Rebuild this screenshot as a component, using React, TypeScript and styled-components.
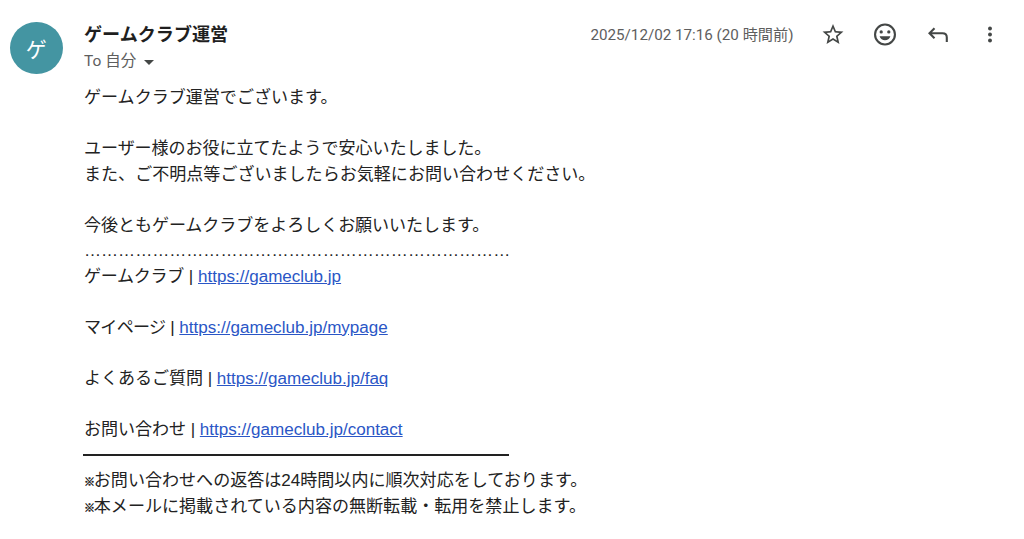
import React, { ReactElement } from 'react';
import styled, { createGlobalStyle } from 'styled-components';

interface MailLink {
  label: string;
  url: string;
  tracking: number;
}

const links: MailLink[] = [
  { label: 'ゲームクラブ', url: 'https://gameclub.jp', tracking: -0.28 },
  { label: 'マイページ', url: 'https://gameclub.jp/mypage', tracking: -0.7 },
  { label: 'よくあるご質問', url: 'https://gameclub.jp/faq', tracking: -0.06 },
  { label: 'お問い合わせ', url: 'https://gameclub.jp/contact', tracking: -0.06 },
];

const StarIcon = () => (
  <Icon viewBox="0.5 0.5 23 23">
    <path d="M22 9.24l-7.19-.62L12 2 9.19 8.63 2 9.24l5.46 4.73L5.82 21 12 17.27 18.18 21l-1.63-7.03L22 9.24zM12 15.4l-3.76 2.27 1-4.28-3.32-2.88 4.38-.38L12 6.1l1.71 4.04 4.38.38-3.32 2.88 1 4.28L12 15.4z" />
  </Icon>
);

const EmojiIcon = () => (
  <Icon viewBox="0 0 24 24">
    <path
      fillRule="evenodd"
      d="M12 1a11 11 0 1 0 0 22 11 11 0 0 0 0-22zm0 2.1a8.9 8.9 0 1 1 0 17.8 8.9 8.9 0 0 1 0-17.8z"
    />
    <circle cx="8.2" cy="9.4" r="1.65" />
    <circle cx="15.8" cy="9.4" r="1.65" />
    <path d="M6.6 13.8h10.8c-.8 2.400-2.900 4-5.400 4s-4.600-1.600-5.400-4z" />
  </Icon>
);

const ReplyIcon = () => (
  <Icon viewBox="0 0 24 24">
    <path
      d="M8.500 5.800L3.500 10.800 8.500 15.800M3.700 10.800H16.500Q20.800 10.800 20.800 15.100V19.600"
      fill="none"
      stroke="currentColor"
      strokeWidth="2.1"
    />
  </Icon>
);

const MoreIcon = () => (
  <Icon viewBox="0 0 24 24">
    <circle cx="12" cy="6" r="1.95" />
    <circle cx="12" cy="12" r="1.95" />
    <circle cx="12" cy="18" r="1.95" />
  </Icon>
);

const App = (): ReactElement => {
  return (
    <>
      <GlobalStyle />
      <MailBlock>
        <Avatar>ゲ</Avatar>
        <Content>
          <Header>
            <Sender>
              <SenderName>ゲームクラブ運営</SenderName>
              <Recipient>
                To 自分
                <Caret />
              </Recipient>
            </Sender>
            <DateText>2025/12/02 17:16 (20 時間前)</DateText>
            <Actions>
              <IconButton aria-label="スター">
                <StarIcon />
              </IconButton>
              <IconButton aria-label="リアクション">
                <EmojiIcon />
              </IconButton>
              <IconButton aria-label="返信">
                <ReplyIcon />
              </IconButton>
              <IconButton aria-label="その他">
                <MoreIcon />
              </IconButton>
            </Actions>
          </Header>
          <Body>
            <Line>ゲームクラブ運営でございます。</Line>
            <Line />
            <Line tracking={-0.06}>
              ユーザー様のお役に立てたようで安心いたしました。
            </Line>
            <Line>
              また、ご不明点等ございましたらお気軽にお問い合わせください。
            </Line>
            <Line />
            <Line tracking={-0.07}>
              今後ともゲームクラブをよろしくお願いいたします。
            </Line>
            <Line>{'…'.repeat(25)}</Line>
            {links.map((link, index) => (
              <React.Fragment key={link.url}>
                {index > 0 && <Line />}
                <Line>
                  <Label tracking={link.tracking}>{link.label}</Label>
                  {' | '}
                  <Link href={link.url}>{link.url}</Link>
                </Line>
              </React.Fragment>
            ))}
            <Divider />
            <Line>
              <Mark>※</Mark>
              お問い合わせへの返答は24時間以内に順次対応をしております。
            </Line>
            <Line>
              <Mark>※</Mark>
              本メールに掲載されている内容の無断転載・転用を禁止します。
            </Line>
          </Body>
        </Content>
      </MailBlock>
    </>
  );
};

const GlobalStyle = createGlobalStyle`
  body {
    margin: 0;
    background: #ffffff;
  }
`;

const MailBlock = styled.div`
  display: flex;
  box-sizing: border-box;
  height: 539px;
  padding: 22px 22px 0 10px;
  color: #222222;
  font-family: 'Liberation Sans', 'Noto Sans CJK JP', sans-serif;
`;

const Avatar = styled.div`
  display: flex;
  align-items: center;
  justify-content: center;
  flex: none;
  width: 52.5px;
  height: 52px;
  margin-right: 21.5px;
  border-radius: 50%;
  background: #4495a2;
  color: #ffffff;
  font-family: 'Noto Sans CJK JP', sans-serif;
  font-size: 21px;
  line-height: 50px;
`;

const Content = styled.div`
  flex: 1;
  min-width: 0;
`;

const Header = styled.div`
  display: flex;
  height: 63px;
`;

const Sender = styled.div`
  flex: 1;
`;

const SenderName = styled.div`
  height: 26px;
  color: #1f1f1f;
  font-family: 'Noto Sans CJK JP', sans-serif;
  font-size: 18.1px;
  font-weight: 700;
  line-height: 22px;
`;

const Recipient = styled.div`
  display: flex;
  align-items: center;
  color: #5e5e5e;
  font-family: Roboto, 'Noto Sans CJK JP', sans-serif;
  font-size: 15.5px;
  line-height: 27px;
`;

const Caret = styled.span`
  margin: 2px 0 0 8px;
  border: 5px solid transparent;
  border-top-color: #444746;
  border-bottom: 0;
`;

const DateText = styled.div`
  height: 25px;
  color: #5e5e5e;
  font-family: Roboto, 'Noto Sans CJK JP', sans-serif;
  font-size: 15.2px;
  line-height: 26px;
  white-space: nowrap;
`;

const Actions = styled.div`
  display: flex;
  gap: 28.5px;
  margin-left: 27px;
`;

const IconButton = styled.button`
  display: flex;
  width: 24px;
  height: 25px;
  padding: 0;
  border: 0;
  background: none;
  color: #444746;
  cursor: pointer;
`;

const Icon = styled.svg`
  display: block;
  width: 24px;
  height: 25px;
  fill: currentColor;
`;

const Body = styled.div`
  font-size: 17.06px;
`;

const Line = styled.div<{ tracking?: number }>`
  height: 25.55px;
  line-height: 25.55px;
  letter-spacing: ${props => props.tracking || 0}px;
  white-space: nowrap;
`;

const Label = styled.span<{ tracking: number }>`
  letter-spacing: ${props => props.tracking}px;
`;

const Link = styled.a`
  color: #2a56c6;
  text-decoration: underline;
`;

const Divider = styled.div`
  width: 426px;
  height: 2px;
  margin: 11px 0 12.8px -0.6px;
  background: #222222;
`;

const Mark = styled.span`
  display: inline-block;
  width: 9.8px;
  font-size: 11px;
  font-weight: 700;
  -webkit-text-stroke: 0.4px currentColor;
`;

export default App;
